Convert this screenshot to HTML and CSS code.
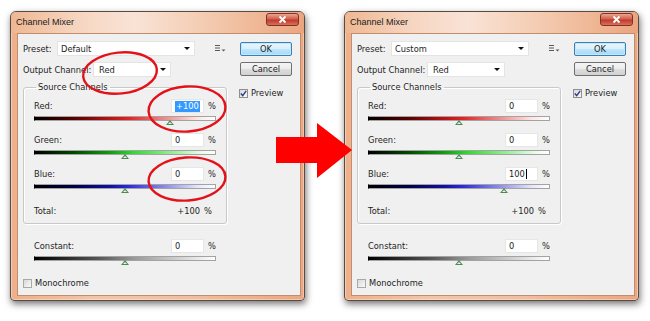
FILE: index.html
```html
<!DOCTYPE html>
<html lang="en">
<head>
    <meta charset="UTF-8">
    <title>Channel Mixer</title>
    <link rel="stylesheet" href="styles.css">
</head>
<body>
    <div class="stage">
        <!-- before -->
        <div class="dialog">
            <div class="titlebar">
                <span class="title">Channel Mixer</span>
                <span class="close"><svg width="11" height="9" viewBox="0 0 11 9"><path d="M2.5 1.5 L8.5 7.5 M8.5 1.5 L2.5 7.5" stroke="#fff" stroke-width="1.8"/></svg></span>
            </div>
            <div class="client">
                <div class="main">
                    <div class="row">
                        <span class="label label-preset">Preset:</span>
                        <div class="select select-preset"><span>Default</span><i class="caret"></i></div>
                        <svg class="menu-icon" width="11" height="7" viewBox="0 0 11 7"><path d="M0 0.5h5M0 3h5M0 5.5h5" stroke="#5a5a5a"/><path d="M6.5 4.5h4l-2 2z" fill="#5a5a5a"/></svg>
                    </div>
                    <div class="row row-output">
                        <span class="label label-output">Output Channel:</span>
                        <div class="select select-output"><span>Red</span><i class="caret"></i></div>
                    </div>
                    <fieldset class="group">
                        <legend>Source Channels</legend>
                        <div class="channel">
                            <div class="channel-head"><span class="name">Red:</span><span class="field"><span class="selected">+100</span></span><span class="pct">%</span></div>
                            <div class="track track-red"><span class="thumb" style="left:75%"></span></div>
                        </div>
                        <div class="channel">
                            <div class="channel-head"><span class="name">Green:</span><span class="field">0</span><span class="pct">%</span></div>
                            <div class="track track-green"><span class="thumb" style="left:50%"></span></div>
                        </div>
                        <div class="channel">
                            <div class="channel-head"><span class="name">Blue:</span><span class="field">0</span><span class="pct">%</span></div>
                            <div class="track track-blue"><span class="thumb" style="left:50%"></span></div>
                        </div>
                        <div class="total"><span class="name">Total:</span><span class="total-value">+100</span><span class="total-pct">%</span></div>
                    </fieldset>
                    <div class="channel constant">
                        <div class="channel-head"><span class="name">Constant:</span><span class="field">0</span><span class="pct">%</span></div>
                        <div class="track track-gray"><span class="thumb" style="left:50%"></span></div>
                    </div>
                    <div class="check mono"><span class="box"></span>Monochrome</div>
                </div>
                <div class="side">
                    <div class="btn btn-ok">OK</div>
                    <div class="btn">Cancel</div>
                    <div class="check preview"><span class="box"><svg width="7" height="7" viewBox="0 0 7 7"><path d="M0.8 3.6 L2.7 5.6 L6.2 0.8" fill="none" stroke="#2b3c86" stroke-width="1.4"/></svg></span>Preview</div>
                </div>
            </div>
        </div>

        <!-- after -->
        <div class="dialog">
            <div class="titlebar">
                <span class="title">Channel Mixer</span>
                <span class="close"><svg width="11" height="9" viewBox="0 0 11 9"><path d="M2.5 1.5 L8.5 7.5 M8.5 1.5 L2.5 7.5" stroke="#fff" stroke-width="1.8"/></svg></span>
            </div>
            <div class="client">
                <div class="main">
                    <div class="row">
                        <span class="label label-preset">Preset:</span>
                        <div class="select select-preset"><span>Custom</span><i class="caret"></i></div>
                        <svg class="menu-icon" width="11" height="7" viewBox="0 0 11 7"><path d="M0 0.5h5M0 3h5M0 5.5h5" stroke="#5a5a5a"/><path d="M6.5 4.5h4l-2 2z" fill="#5a5a5a"/></svg>
                    </div>
                    <div class="row row-output">
                        <span class="label label-output">Output Channel:</span>
                        <div class="select select-output"><span>Red</span><i class="caret"></i></div>
                    </div>
                    <fieldset class="group">
                        <legend>Source Channels</legend>
                        <div class="channel">
                            <div class="channel-head"><span class="name">Red:</span><span class="field">0</span><span class="pct">%</span></div>
                            <div class="track track-red"><span class="thumb" style="left:50%"></span></div>
                        </div>
                        <div class="channel">
                            <div class="channel-head"><span class="name">Green:</span><span class="field">0</span><span class="pct">%</span></div>
                            <div class="track track-green"><span class="thumb" style="left:50%"></span></div>
                        </div>
                        <div class="channel">
                            <div class="channel-head"><span class="name">Blue:</span><span class="field">100<i class="cursor"></i></span><span class="pct">%</span></div>
                            <div class="track track-blue"><span class="thumb" style="left:75%"></span></div>
                        </div>
                        <div class="total"><span class="name">Total:</span><span class="total-value">+100</span><span class="total-pct">%</span></div>
                    </fieldset>
                    <div class="channel constant">
                        <div class="channel-head"><span class="name">Constant:</span><span class="field">0</span><span class="pct">%</span></div>
                        <div class="track track-gray"><span class="thumb" style="left:50%"></span></div>
                    </div>
                    <div class="check mono"><span class="box"></span>Monochrome</div>
                </div>
                <div class="side">
                    <div class="btn btn-ok">OK</div>
                    <div class="btn">Cancel</div>
                    <div class="check preview"><span class="box"><svg width="7" height="7" viewBox="0 0 7 7"><path d="M0.8 3.6 L2.7 5.6 L6.2 0.8" fill="none" stroke="#2b3c86" stroke-width="1.4"/></svg></span>Preview</div>
                </div>
            </div>
        </div>
    </div>

    <!-- annotations drawn over the screenshots -->
    <svg class="marks" width="650" height="321" viewBox="0 0 650 321">
        <ellipse cx="120" cy="73" rx="37" ry="20.5" transform="rotate(-6 120 73)" fill="none" stroke="#e3121a" stroke-width="2.4"/>
        <ellipse cx="187" cy="109" rx="38.5" ry="22.5" transform="rotate(-4 187 109)" fill="none" stroke="#e3121a" stroke-width="2.4"/>
        <ellipse cx="187" cy="179" rx="38.5" ry="21.5" transform="rotate(-4 187 179)" fill="none" stroke="#e3121a" stroke-width="2.4"/>
        <polygon points="276,137 317,137 317,123 352,150 317,178 317,163 276,163" fill="#ff0000"/>
    </svg>
</body>
</html>
```

FILE: styles.css
```css
body {
    margin: 0;
    padding: 0;
    background-color: #fff;
    font-family: 'DejaVu Sans', Verdana, sans-serif;
    font-size: 8.3px;
    color: #1e1e1e;
    position: relative;
    width: 650px;
    height: 321px;
    overflow: hidden;
}
.stage {
    display: flex;
    gap: 39px;
    padding: 11px 10px 0 10px;
}
.dialog {
    width: 295px;
    height: 290px;
    box-sizing: border-box;
    border: 1px solid #5a4b42;
    border-radius: 6px 6px 4px 4px;
    background: linear-gradient(to right, #eeb08b 0%, #f3c6a8 30%, #f1bf9f 60%, #eba781 100%);
    box-shadow: 1px 3px 7px rgba(0, 0, 0, 0.55), inset 0 0 0 1px rgba(255, 255, 255, 0.35);
    display: flex;
    flex-direction: column;
}
.titlebar {
    height: 21px;
    display: flex;
    align-items: flex-start;
    justify-content: space-between;
    padding: 0 5px 0 5px;
    border-radius: 5px 5px 0 0;
    background: linear-gradient(to right, #efb792 0%, #f6d5c0 22%, #f9e3d6 42%, #f4cdb3 65%, #eba57e 100%);
}
.title {
    font-family: 'Liberation Sans', Arial, sans-serif;
    font-size: 9px;
    line-height: 21px;
    color: #1a1a1a;
}
.close {
    margin-top: 1px;
    width: 33px;
    height: 13px;
    box-sizing: border-box;
    border: 1px solid #7c3329;
    border-radius: 3px;
    background: linear-gradient(to bottom, #e9a595 0%, #d35f4d 45%, #c23a29 55%, #d8705c 100%);
    display: flex;
    justify-content: center;
    align-items: center;
}
.client {
    flex: 1;
    margin: 0 3px 4px 6px;
    border: 1px solid #c38c6a;
    background-color: #f0f0f0;
    display: flex;
    gap: 12px;
}
.main {
    width: 204px;
    padding: 7px 0 0 5px;
}
.row {
    display: flex;
    align-items: center;
    height: 15px;
}
.row-output {
    margin-top: 6px;
}
.label-preset {
    width: 34px;
}
.label-output {
    width: 70px;
}
.select {
    height: 15px;
    box-sizing: border-box;
    background-color: #fff;
    border: 1px solid #e4e4e4;
    display: flex;
    align-items: center;
    justify-content: space-between;
    padding: 0 4px 0 3px;
}
.select-preset {
    width: 138px;
}
.select-output {
    width: 78px;
    padding-left: 5px;
}
.caret {
    width: 0;
    height: 0;
    border-left: 3px solid transparent;
    border-right: 3px solid transparent;
    border-top: 3px solid #111;
}
.menu-icon {
    margin-left: 20px;
}
.group {
    margin: 5px 0 0 0;
    padding: 6px 10px 5px 10px;
    min-width: 0;
    border: 1px solid #c9c9c9;
    border-radius: 3px;
    box-shadow: inset 1px 1px 0 #fff, 1px 1px 0 #fff;
}
.group legend {
    padding: 0 2px;
    margin-left: 2px;
    line-height: 11px;
}
.channel {
    padding-bottom: 12px;
}
.channel-head {
    display: flex;
    align-items: center;
    height: 14px;
}
.name {
    flex: 1;
}
.field {
    width: 33px;
    height: 14px;
    box-sizing: border-box;
    background-color: #fff;
    border: 1px solid #e6e6e6;
    padding-left: 3px;
    display: flex;
    align-items: center;
}
.selected {
    background-color: #3399ff;
    color: #fff;
    padding: 0 1px;
    line-height: 11px;
}
.cursor {
    width: 1px;
    height: 10px;
    background-color: #000;
    margin-left: 1px;
}
.pct {
    width: 12px;
    text-align: right;
}
.track {
    position: relative;
    margin-top: 3px;
    height: 5px;
    box-sizing: border-box;
    border: 1px solid #a3a3a3;
    border-left-color: #000;
}
.track-red {
    background: linear-gradient(to right, #000 0%, #5a0000 22%, #c01010 42%, #e82020 52%, #f08a8a 72%, #fde4e4 90%, #fff 100%);
}
.track-green {
    background: linear-gradient(to right, #000 0%, #004a00 22%, #10a010 42%, #30dc30 55%, #90ec90 75%, #e8fbe8 92%, #fff 100%);
}
.track-blue {
    background: linear-gradient(to right, #000 0%, #00004a 22%, #1010a8 42%, #2a2ae0 52%, #8a8aee 72%, #e4e4fc 90%, #fff 100%);
}
.track-gray {
    background: linear-gradient(to right, #000 0%, #555 35%, #999 55%, #ddd 85%, #fff 100%);
}
.thumb {
    position: absolute;
    top: 3px;
    width: 0;
    height: 0;
    margin-left: -4px;
    border-left: 4px solid transparent;
    border-right: 4px solid transparent;
    border-bottom: 5px solid #4f8a55;
}
.thumb::after {
    content: "";
    position: absolute;
    left: -2px;
    top: 2px;
    border-left: 2px solid transparent;
    border-right: 2px solid transparent;
    border-bottom: 2px solid #e6f3e6;
}
.total {
    display: flex;
    align-items: center;
    height: 14px;
    margin-top: 3px;
}
.total-value {
    margin-right: 4px;
}
.total-pct {
    width: 7px;
    margin-right: 5px;
}
.constant {
    margin-top: 15px;
    padding: 0 11px 0 11px;
}
.check {
    display: flex;
    align-items: center;
    gap: 3px;
}
.box {
    width: 9px;
    height: 9px;
    box-sizing: border-box;
    border: 1px solid #8f8f8f;
    background: linear-gradient(135deg, #d8d8d8, #fafafa);
    display: flex;
    align-items: center;
    justify-content: center;
}
.mono {
    margin-top: 17px;
}
.mono .box {
    border-color: #a8a8a8;
}
.side {
    width: 53px;
    padding-top: 8px;
}
.btn {
    height: 14px;
    box-sizing: border-box;
    margin-left: 1px;
    border: 1px solid #707070;
    border-radius: 2px;
    background: linear-gradient(to bottom, #f4f4f4 0%, #ececec 50%, #dedede 50%, #d1d1d1 100%);
    text-align: center;
    line-height: 12px;
}
.btn + .btn {
    margin-top: 6px;
}
.btn-ok {
    border-color: #3c7fb1;
    background: linear-gradient(to bottom, #eaf6fd 0%, #d9f0fc 50%, #bee6fd 50%, #a7d9f5 100%);
    box-shadow: inset 0 0 0 1px #c3e7fb;
}
.preview {
    margin-top: 12px;
}
.marks {
    position: absolute;
    left: 0;
    top: 0;
    pointer-events: none;
}
```
